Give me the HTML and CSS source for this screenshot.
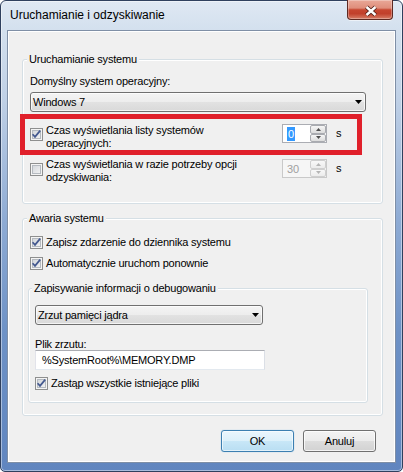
FILE: index.html
```html
<!DOCTYPE html>
<html lang="pl">
<head>
<meta charset="utf-8">
<title>Uruchamianie i odzyskiwanie</title>
<link rel="stylesheet" href="styles.css">
</head>
<body>
<div class="window">
  <div class="titlebar">
    <span class="title">Uruchamianie i odzyskiwanie</span>
    <div class="close">
      <svg width="44" height="19" viewBox="0 0 44 19">
        <path d="M18.5 7 L27.5 15 M27.5 7 L18.5 15" stroke="#4a1d16" stroke-width="4.2" fill="none"/>
        <path d="M18.5 7 L27.5 15 M27.5 7 L18.5 15" stroke="#ffffff" stroke-width="2.4" fill="none"/>
      </svg>
    </div>
  </div>
  <div class="client">
    <fieldset class="group g-start">
      <legend>Uruchamianie systemu</legend>
      <div class="label">Domyślny system operacyjny:</div>
      <div class="combo combo-os">
        <span>Windows 7</span>
        <svg class="arrow" width="7" height="4" viewBox="0 0 7 4"><polygon points="0,0 7,0 3.5,4" fill="#000"/></svg>
      </div>
      <div class="opt opt-list">
        <span class="cb"><svg width="11" height="11" viewBox="0 0 11 11"><path d="M1.6 5.2 L4 7.9 L9.2 1.6" stroke="#44598f" stroke-width="1.7" fill="none"/></svg></span>
        <span class="opt-text">Czas wyświetlania listy systemów<br>operacyjnych:</span>
        <div class="spin">
          <div class="spin-field"><span class="selected">0</span></div>
          <div class="spin-btns">
            <span class="sb"><svg width="5" height="3" viewBox="0 0 5 3"><polygon points="0,3 5,3 2.5,0" fill="#4d4d4d"/></svg></span>
            <span class="sb"><svg width="5" height="3" viewBox="0 0 5 3"><polygon points="0,0 5,0 2.5,3" fill="#4d4d4d"/></svg></span>
          </div>
        </div>
        <span class="unit">s</span>
        <div class="annotation"></div>
      </div>
      <div class="opt opt-recovery">
        <span class="cb"></span>
        <span class="opt-text">Czas wyświetlania w razie potrzeby opcji<br>odzyskiwania:</span>
        <div class="spin disabled">
          <div class="spin-field">30</div>
          <div class="spin-btns">
            <span class="sb"><svg width="5" height="3" viewBox="0 0 5 3"><polygon points="0,3 5,3 2.5,0" fill="#b4b4b4"/></svg></span>
            <span class="sb"><svg width="5" height="3" viewBox="0 0 5 3"><polygon points="0,0 5,0 2.5,3" fill="#b4b4b4"/></svg></span>
          </div>
        </div>
        <span class="unit">s</span>
      </div>
    </fieldset>

    <fieldset class="group g-crash">
      <legend>Awaria systemu</legend>
      <div class="check-row row-log">
        <span class="cb"><svg width="11" height="11" viewBox="0 0 11 11"><path d="M1.6 5.2 L4 7.9 L9.2 1.6" stroke="#44598f" stroke-width="1.7" fill="none"/></svg></span>
        <span>Zapisz zdarzenie do dziennika systemu</span>
      </div>
      <div class="check-row row-restart">
        <span class="cb"><svg width="11" height="11" viewBox="0 0 11 11"><path d="M1.6 5.2 L4 7.9 L9.2 1.6" stroke="#44598f" stroke-width="1.7" fill="none"/></svg></span>
        <span>Automatycznie uruchom ponownie</span>
      </div>

      <fieldset class="group g-debug">
        <legend>Zapisywanie informacji o debugowaniu</legend>
        <div class="combo combo-dump">
          <span>Zrzut pamięci jądra</span>
          <svg class="arrow" width="7" height="4" viewBox="0 0 7 4"><polygon points="0,0 7,0 3.5,4" fill="#000"/></svg>
        </div>
        <div class="label label-file">Plik zrzutu:</div>
        <div class="textbox">%SystemRoot%\MEMORY.DMP</div>
        <div class="check-row row-overwrite">
          <span class="cb"><svg width="11" height="11" viewBox="0 0 11 11"><path d="M1.6 5.2 L4 7.9 L9.2 1.6" stroke="#44598f" stroke-width="1.7" fill="none"/></svg></span>
          <span>Zastąp wszystkie istniejące pliki</span>
        </div>
      </fieldset>
    </fieldset>

    <div class="buttons">
      <div class="btn btn-default">OK</div>
      <div class="btn">Anuluj</div>
    </div>
  </div>
</div>
</body>
</html>
```

FILE: styles.css
```css
html, body {
  margin: 0;
  padding: 0;
  background: #ffffff;
}

body {
  font-family: "Liberation Sans", Arial, sans-serif;
  font-size: 11px;
  letter-spacing: -0.2px;
  color: #000;
}

.window {
  width: 403px;
  height: 472px;
  box-sizing: border-box;
  border: 1px solid #2f405e;
  border-radius: 6px 6px 5px 5px;
  background: linear-gradient(180deg, #dfe8f3 0px, #d3e0ee 30px, #bfd0e6 100px, #8eabd4 220px, #6e92c6 330px, #6085bf 472px);
  box-shadow: inset 0 0 0 1px rgba(255, 255, 255, 0.45);
  display: flex;
  flex-direction: column;
}

.titlebar {
  flex: none;
  height: 29px;
  display: flex;
  align-items: flex-start;
}

.title {
  font-size: 12px;
  letter-spacing: 0;
  line-height: 15px;
  padding: 7px 0 0 9px;
  color: #000;
}

.close {
  margin: -1px 9px 0 auto;
  width: 46px;
  height: 20px;
  box-sizing: border-box;
  border: 1px solid #5e2a22;
  border-top: none;
  border-radius: 0 0 4px 4px;
  background: linear-gradient(180deg, #e9a898 0%, #df8e7b 42%, #c6452f 52%, #c1402b 72%, #d77d66 100%);
  box-shadow: 0 1px 0 rgba(255, 255, 255, 0.55), inset 0 0 0 1px rgba(255, 255, 255, 0.3);
  display: flex;
}

.client {
  flex: 1;
  margin: 0 6px 8px 6px;
  border: 1px solid #7f8fa6;
  box-shadow: inset 0 0 0 1px #ffffff;
  background: #f0f0f0;
  padding: 0 12px 0 14px;
  display: flex;
  flex-direction: column;
}

.group {
  margin: 0;
  border: 1px solid #d5dfe5;
  border-radius: 3px;
  padding: 0 7px;
  box-shadow: inset 0 0 0 1px #ffffff;
  min-width: 0;
}

.group legend {
  padding: 0 2px;
  margin-left: -3px;
  line-height: 15px;
  background: #f0f0f0;
}

.g-start {
  margin-top: 21px;
  padding-bottom: 19px;
}

.label {
  margin-top: 7px;
  line-height: 15px;
}

.combo {
  margin-top: 3px;
  height: 20px;
  box-sizing: border-box;
  border: 1px solid #707070;
  border-radius: 3px;
  background: linear-gradient(180deg, #f4f4f4 0%, #ededed 50%, #e2e2e2 51%, #d9d9d9 100%);
  box-shadow: inset 0 0 0 1px rgba(255, 255, 255, 0.7);
  display: flex;
  align-items: center;
  justify-content: space-between;
  padding: 0 3px 0 2px;
  line-height: 18px;
}

.combo-os {
  width: 336px;
}

.opt {
  display: flex;
  align-items: flex-start;
  position: relative;
}

.opt-list {
  margin-top: 12px;
}

.opt-recovery {
  margin-top: 8px;
}

.cb {
  flex: none;
  width: 13px;
  height: 13px;
  box-sizing: border-box;
  border: 1px solid #8e8f8f;
  background: linear-gradient(135deg, #cdd1d6, #f7f7f7);
  box-shadow: inset 0 0 0 1px #f4f4f4, inset 0 0 0 2px #b5bac0;
  margin-right: 3px;
  display: flex;
}

.opt-list .cb {
  margin-top: 4px;
}

.opt-recovery .cb {
  margin-top: 5px;
}

.opt-text {
  width: 236px;
  line-height: 13px;
}

.spin {
  flex: none;
  width: 45px;
  height: 19px;
  box-sizing: border-box;
  border: 1px solid #abadb3;
  background: #ffffff;
  display: flex;
}

.opt-recovery .spin,
.opt-recovery .unit {
  margin-top: 1px;
}

.spin-field {
  flex: 1;
  padding-left: 4px;
  display: flex;
  align-items: center;
  line-height: 14px;
}

.selected {
  background: #3399ff;
  color: #ffffff;
  padding: 0 1px;
}

.spin-btns {
  width: 16px;
  display: flex;
  flex-direction: column;
}

.sb {
  flex: 1;
  box-sizing: border-box;
  border: 1px solid #a9abb0;
  border-radius: 2px;
  background: linear-gradient(180deg, #f6f6f6, #dcdcdc);
  display: flex;
  align-items: center;
  justify-content: center;
}

.spin.disabled {
  border-color: #c9c9c9;
  background: #f6f6f6;
  color: #a0a0a0;
}

.spin.disabled .sb {
  border-color: #cfcfcf;
  background: linear-gradient(180deg, #f8f8f8, #ececec);
}

.unit {
  margin-left: 9px;
  line-height: 19px;
}

.annotation {
  position: absolute;
  left: -10px;
  top: -10px;
  width: 342px;
  height: 41px;
  box-sizing: border-box;
  border: 5px solid #e0202b;
  pointer-events: none;
}

.g-crash {
  margin-top: 7px;
  padding-bottom: 12px;
}

.check-row {
  display: flex;
  align-items: center;
  line-height: 15px;
}

.row-log {
  margin-top: 9px;
}

.row-restart {
  margin-top: 6px;
}

.g-debug {
  margin-top: 10px;
  margin-left: -2px;
  width: 340px;
  box-sizing: border-box;
  padding: 0 6px 11px;
}

.combo-dump {
  margin-top: 9px;
  width: 228px;
}

.label-file {
  margin-top: 13px;
  line-height: 12px;
}

.textbox {
  width: 230px;
  height: 20px;
  box-sizing: border-box;
  border: 1px solid #abadb3;
  border-color: #abadb3 #dbdfe6 #e3e9ef #e2e3ea;
  background: #ffffff;
  padding: 0 6px;
  line-height: 18px;
}

.row-overwrite {
  margin-top: 6px;
}

.buttons {
  margin-top: 14px;
  display: flex;
  justify-content: flex-end;
  gap: 9px;
  padding-right: 7px;
}

.btn {
  width: 73px;
  height: 22px;
  box-sizing: border-box;
  border: 1px solid #707070;
  border-radius: 3px;
  background: linear-gradient(180deg, #f3f3f3 0%, #ebebeb 50%, #dddddd 51%, #d2d2d2 100%);
  box-shadow: inset 0 0 0 1px rgba(255, 255, 255, 0.75);
  text-align: center;
  line-height: 20px;
}

.btn-default {
  border-color: #3c7fb1;
  background: linear-gradient(180deg, #eaf6fd 0%, #dcf0fa 50%, #c8e7f7 51%, #b9def2 100%);
  box-shadow: inset 0 0 0 1px rgba(255, 255, 255, 0.6), 0 0 1px #6fb6e6;
}
```
